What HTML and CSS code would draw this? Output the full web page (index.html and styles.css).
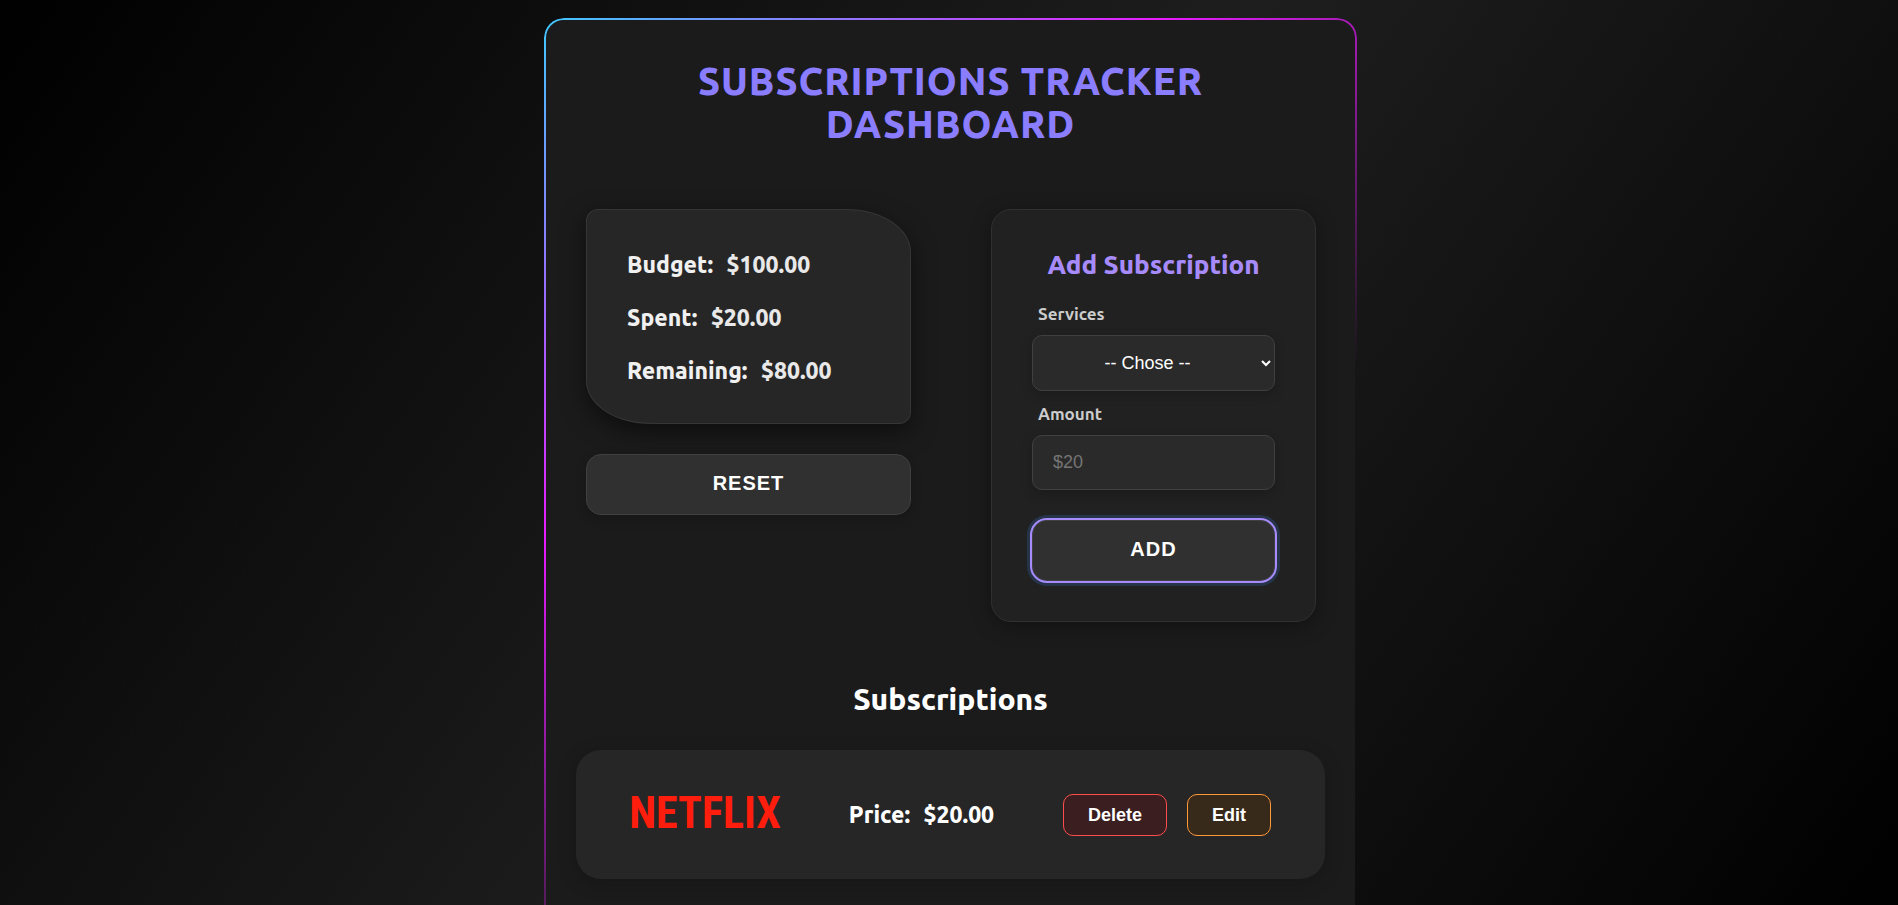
FILE: index.html
```html
<!DOCTYPE html>
<html lang="en">
<head>
<meta charset="utf-8">
<meta name="viewport" content="width=device-width, initial-scale=1">
<title>Subscriptions Tracker Dashboard</title>
<link rel="stylesheet" href="styles.css">
</head>
<body>
<main class="dashboard">
  <h1 class="title">Subscriptions Tracker Dashboard</h1>
  <div class="panels">
    <section class="overview">
      <div class="budget">
        <p class="line">Budget: <span class="value">$100.00</span></p>
        <p class="line">Spent: <span class="value">$20.00</span></p>
        <p class="line">Remaining: <span class="value">$80.00</span></p>
      </div>
      <button class="btn" type="button">RESET</button>
    </section>
    <form class="form">
      <h2 class="form-title">Add Subscription</h2>
      <label class="label" for="service">Services</label>
      <select class="field select" id="service">
        <option>-- Chose --</option>
        <option>Netflix</option>
      </select>
      <label class="label" for="amount">Amount</label>
      <input class="field" id="amount" type="text" placeholder="$20">
      <button class="btn btn-active" type="button">ADD</button>
    </form>
  </div>
  <section class="list">
    <h2 class="list-title">Subscriptions</h2>
    <article class="item">
      <svg class="logo" viewBox="0 0 150 56" role="img" aria-label="Netflix"><text class="logo-text" x="75" y="41" text-anchor="middle">NETFLIX</text></svg>
      <p class="price">Price: <span class="value">$20.00</span></p>
      <div class="actions">
        <button class="action delete" type="button">Delete</button>
        <button class="action edit" type="button">Edit</button>
      </div>
    </article>
  </section>
</main>
</body>
</html>
```

FILE: styles.css
```css
* {
  box-sizing: border-box;
}

body {
  margin: 0;
  min-height: 100vh;
  padding: 18px 0 0 3px;
  background: linear-gradient(125deg, #000 0%, #1e1e1e 50%, #000 100%) fixed;
  color: #fff;
  font-family: Ubuntu, "Noto Sans", sans-serif;
  overflow: hidden;
}

h1, h2, p {
  margin: 0;
  font-weight: 800;
}

.dashboard {
  position: relative;
  max-width: 813px;
  margin: 0 auto;
  padding: 40px 30px 60px;
  border: 2px solid transparent;
  border-radius: 20px;
  background: #1b1b1b padding-box;
}

/* gradient frame */
.dashboard::before {
  content: "";
  position: absolute;
  inset: -2px;
  padding: 2px;
  border-radius: 20px;
  background: linear-gradient(140deg, #40c9ff 0, #e81cff 400px, transparent 791px);
  mask: linear-gradient(#000 0 0) content-box exclude, linear-gradient(#000 0 0);
  pointer-events: none;
}

.title {
  max-width: 600px;
  margin: 0 auto;
  color: #8b7dff;
  font-size: 38px;
  line-height: 43px;
  letter-spacing: 1px;
  text-align: center;
  text-transform: uppercase;
}

.panels {
  display: grid;
  grid-template-columns: 1fr 1fr;
  gap: 80px;
  align-items: start;
  margin-top: 63px;
  padding: 0 9px 0 10px;
}

.overview {
  display: grid;
  gap: 30px;
}

.budget {
  display: grid;
  gap: 26px;
  padding: 41px 40px 39px;
  border: 1px solid #363636;
  border-radius: 12px 20% 12px 20%;
  background: #262626;
  box-shadow: 0 8px 24px rgba(0, 0, 0, 0.5);
  color: #f0f0f0;
}

.line, .price {
  font-size: 23px;
  line-height: 27px;
  white-space: nowrap;
}

.value {
  margin-left: 8px;
}

.budget .value {
  color: #e8e8e8;
}

.btn {
  width: 100%;
  height: 61px;
  padding: 0 0 2px;
  border: 1px solid #404040;
  border-radius: 15px;
  background: #303030;
  box-shadow: 0 4px 12px rgba(0, 0, 0, 0.2);
  color: #fff;
  font-family: "Liberation Sans", Arial, sans-serif;
  font-size: 20px;
  font-weight: 700;
  letter-spacing: 1px;
}

.btn-active {
  margin-top: 30px;
  outline: 2px solid #a78bfa;
  box-shadow: 0 0 0 5px #26344a;
}

.form {
  display: flex;
  flex-direction: column;
  padding: 40px;
  border: 1px solid #303030;
  border-radius: 20px;
  background: #212121;
  box-shadow: 0 4px 20px rgba(0, 0, 0, 0.35);
}

.form-title {
  margin-bottom: 20px;
  color: #a78bfa;
  font-size: 26px;
  line-height: 30px;
  text-align: center;
  white-space: nowrap;
}

.label {
  margin: 0 0 8px 6px;
  color: #ccc;
  font-size: 17px;
  font-weight: 600;
  line-height: 27px;
}

.field {
  width: 100%;
  height: 55px;
  padding: 0 20px;
  border: 1px solid #404040;
  border-radius: 10px;
  background: #2a2a2a;
  box-shadow: 0 4px 12px rgba(0, 0, 0, 0.2);
  color: #fff;
  font-family: "Liberation Sans", Arial, sans-serif;
  font-size: 18px;
}

.field::placeholder {
  color: #757575;
}

.select {
  height: 56px;
  margin-bottom: 9px;
  padding: 0;
  text-align: center;
}

.list {
  margin-top: 59px;
}

.list-title {
  font-size: 30px;
  line-height: 36px;
  text-align: center;
}

.item {
  display: flex;
  align-items: center;
  justify-content: space-between;
  margin-top: 33px;
  min-height: 129px;
  padding: 20px 54px;
  border-radius: 25px;
  background: #262626;
  box-shadow: 0 4px 20px rgba(0, 0, 0, 0.2);
}

.logo {
  width: 150px;
  height: 56px;
  overflow: visible;
}

.logo-text {
  fill: #ff1d0d;
  font-family: "Roboto Condensed", Roboto, sans-serif;
  font-size: 44px;
  font-weight: 700;
}

.actions {
  display: flex;
  gap: 20px;
}

.action {
  padding: 10px 24px;
  border: 1px solid;
  border-radius: 10px;
  color: #fff;
  font-family: "Liberation Sans", Arial, sans-serif;
  font-size: 18px;
  font-weight: 700;
  line-height: 20px;
}

.delete {
  border-color: #ff4d4d;
  background: #3b1e1f;
}

.edit {
  border-color: #ff9838;
  background: #382a1a;
}
```
